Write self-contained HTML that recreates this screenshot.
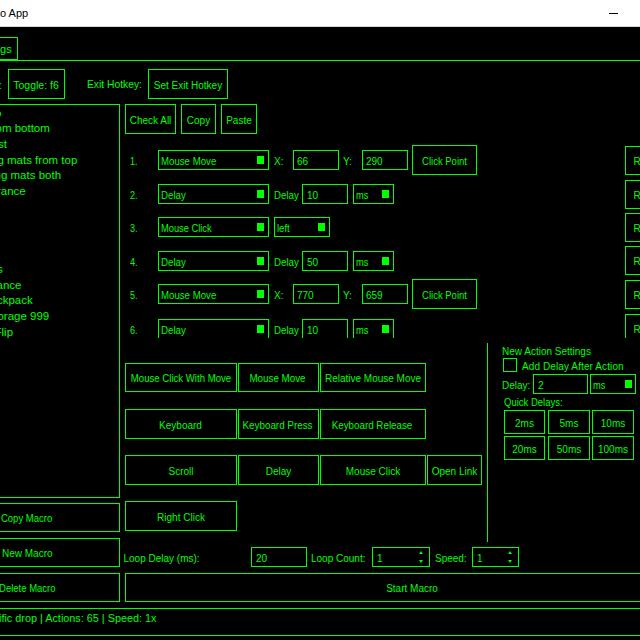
<!DOCTYPE html>
<html><head><meta charset="utf-8"><style>
html,body{margin:0;padding:0;width:640px;height:640px;overflow:hidden;background:#000;font-family:'Liberation Sans', sans-serif}
.b{position:absolute;box-sizing:border-box;border:1px solid #00ff00}
.t{position:absolute;white-space:nowrap;color:#00ff00}
</style></head><body>
<div style="position:absolute;left:0;top:0;width:640px;height:27px;background:#fff"></div>
<div style="position:absolute;left:0;top:26px;width:640px;height:1px;background:#d8d8d8"></div>
<div class="t" style="left:0px;top:8px;font-size:11px;line-height:11px;color:#000;">o App</div>
<div style="position:absolute;left:609px;top:13px;width:9px;height:1px;background:#000"></div>
<div class="b" style="left:-5px;top:37px;width:23px;height:23px;"></div>
<div class="t" style="left:-6px;top:44px;font-size:11px;line-height:11px;color:#00ff00;">ngs</div>
<div style="position:absolute;left:0px;top:60px;width:640px;height:1px;background:#00ff00"></div>
<div class="t" style="left:-1px;top:81px;font-size:10px;line-height:10px;color:#00ff00;">:</div>
<div class="b" style="left:8px;top:69px;width:57px;height:30px;"></div>
<div class="t" style="left:7.5px;width:57.0px;text-align:center;top:80px;font-size:10.5px;line-height:10.5px;">Toggle: f6</div>
<div class="t" style="left:87px;top:80px;font-size:10.3px;line-height:10.3px;color:#00ff00;">Exit Hotkey:</div>
<div class="b" style="left:148px;top:69px;width:80px;height:30px;"></div>
<div class="t" style="left:148px;width:80px;text-align:center;top:81px;font-size:10px;line-height:10px;">Set Exit Hotkey</div>
<div class="b" style="left:-5px;top:104px;width:125px;height:394px;"></div>
<div class="b" style="left:125px;top:104px;width:51px;height:30px;"></div>
<div class="t" style="left:125px;width:51px;text-align:center;top:116px;font-size:10px;line-height:10px;">Check All</div>
<div class="b" style="left:181px;top:104px;width:35px;height:30px;"></div>
<div class="t" style="left:181px;width:35px;text-align:center;top:116px;font-size:10px;line-height:10px;">Copy</div>
<div class="b" style="left:221px;top:104px;width:36px;height:30px;"></div>
<div class="t" style="left:221px;width:36px;text-align:center;top:116px;font-size:10px;line-height:10px;">Paste</div>
<div class="t" style="left:-5px;top:108px;font-size:11.5px;line-height:11.5px;color:#00ff00;">o</div>
<div class="t" style="left:-4.5px;top:123px;font-size:11.5px;line-height:11.5px;color:#00ff00;">om bottom</div>
<div class="t" style="left:-4.5px;top:139px;font-size:11.5px;line-height:11.5px;color:#00ff00;">ist</div>
<div class="t" style="left:-9px;top:155px;font-size:11.5px;line-height:11.5px;color:#00ff00;">ng mats from top</div>
<div class="t" style="left:-8px;top:170px;font-size:11.5px;line-height:11.5px;color:#00ff00;">ing mats both</div>
<div class="t" style="left:-3px;top:186px;font-size:11.5px;line-height:11.5px;color:#00ff00;">rance</div>
<div class="t" style="left:-3px;top:264px;font-size:11.5px;line-height:11.5px;color:#00ff00;">s</div>
<div class="t" style="left:-3.5px;top:280px;font-size:11.5px;line-height:11.5px;color:#00ff00;">ance</div>
<div class="t" style="left:-9.5px;top:295px;font-size:11.5px;line-height:11.5px;color:#00ff00;">ackpack</div>
<div class="t" style="left:-5.75px;top:311px;font-size:11.5px;line-height:11.5px;color:#00ff00;">torage 999</div>
<div class="t" style="left:-5.5px;top:327px;font-size:11.5px;line-height:11.5px;color:#00ff00;">Flip</div>
<div style="position:absolute;left:0;top:0;width:640px;height:338px;overflow:hidden"><div class="t" style="left:130px;top:157px;font-size:10px;line-height:10px;color:#00ff00;transform:scaleX(0.9);transform-origin:0 0;">1.</div>
<div class="b" style="left:158px;top:150px;width:111px;height:20px;"></div>
<div class="t" style="left:160.5px;top:157px;font-size:10px;line-height:10px;color:#00ff00;transform:scaleX(0.965);transform-origin:0 0;">Mouse Move</div>
<div style="position:absolute;left:257px;top:156px;width:7px;height:8px;background:#00ff00"></div>
<div class="t" style="left:274px;top:157px;font-size:10px;line-height:10px;color:#00ff00;">X:</div>
<div class="b" style="left:293px;top:150px;width:46px;height:20px;"></div>
<div class="t" style="left:297px;top:157px;font-size:10px;line-height:10px;color:#00ff00;">66</div>
<div class="t" style="left:343px;top:157px;font-size:10px;line-height:10px;color:#00ff00;">Y:</div>
<div class="b" style="left:362px;top:150px;width:46px;height:20px;"></div>
<div class="t" style="left:366px;top:157px;font-size:10px;line-height:10px;color:#00ff00;">290</div>
<div class="b" style="left:412px;top:145px;width:65px;height:30px;"></div>
<div class="t" style="left:412px;width:65px;text-align:center;top:157px;font-size:10px;line-height:10px;transform:scaleX(0.95);">Click Point</div>
<div class="t" style="left:130px;top:191px;font-size:10px;line-height:10px;color:#00ff00;transform:scaleX(0.9);transform-origin:0 0;">2.</div>
<div class="b" style="left:158px;top:184px;width:111px;height:20px;"></div>
<div class="t" style="left:160.5px;top:191px;font-size:10px;line-height:10px;color:#00ff00;transform:scaleX(0.97);transform-origin:0 0;">Delay</div>
<div style="position:absolute;left:257px;top:190px;width:7px;height:8px;background:#00ff00"></div>
<div class="t" style="left:274px;top:191px;font-size:10px;line-height:10px;color:#00ff00;transform:scaleX(0.97);transform-origin:0 0;">Delay</div>
<div class="b" style="left:302px;top:184px;width:46px;height:20px;"></div>
<div class="t" style="left:307px;top:191px;font-size:10px;line-height:10px;color:#00ff00;">10</div>
<div class="b" style="left:353px;top:184px;width:41px;height:20px;"></div>
<div class="t" style="left:355.5px;top:191px;font-size:10px;line-height:10px;color:#00ff00;transform:scaleX(0.93);transform-origin:0 0;">ms</div>
<div style="position:absolute;left:382px;top:190px;width:7px;height:8px;background:#00ff00"></div>
<div class="t" style="left:130px;top:224px;font-size:10px;line-height:10px;color:#00ff00;transform:scaleX(0.9);transform-origin:0 0;">3.</div>
<div class="b" style="left:158px;top:217px;width:111px;height:20px;"></div>
<div class="t" style="left:160.5px;top:224px;font-size:10px;line-height:10px;color:#00ff00;transform:scaleX(0.93);transform-origin:0 0;">Mouse Click</div>
<div style="position:absolute;left:257px;top:223px;width:7px;height:8px;background:#00ff00"></div>
<div class="b" style="left:274px;top:217px;width:56px;height:20px;"></div>
<div class="t" style="left:276.5px;top:224px;font-size:10px;line-height:10px;color:#00ff00;transform:scaleX(0.95);transform-origin:0 0;">left</div>
<div style="position:absolute;left:318px;top:223px;width:7px;height:8px;background:#00ff00"></div>
<div class="t" style="left:130px;top:258px;font-size:10px;line-height:10px;color:#00ff00;transform:scaleX(0.9);transform-origin:0 0;">4.</div>
<div class="b" style="left:158px;top:251px;width:111px;height:20px;"></div>
<div class="t" style="left:160.5px;top:258px;font-size:10px;line-height:10px;color:#00ff00;transform:scaleX(0.97);transform-origin:0 0;">Delay</div>
<div style="position:absolute;left:257px;top:257px;width:7px;height:8px;background:#00ff00"></div>
<div class="t" style="left:274px;top:258px;font-size:10px;line-height:10px;color:#00ff00;transform:scaleX(0.97);transform-origin:0 0;">Delay</div>
<div class="b" style="left:302px;top:251px;width:46px;height:20px;"></div>
<div class="t" style="left:307px;top:258px;font-size:10px;line-height:10px;color:#00ff00;">50</div>
<div class="b" style="left:353px;top:251px;width:41px;height:20px;"></div>
<div class="t" style="left:355.5px;top:258px;font-size:10px;line-height:10px;color:#00ff00;transform:scaleX(0.93);transform-origin:0 0;">ms</div>
<div style="position:absolute;left:382px;top:257px;width:7px;height:8px;background:#00ff00"></div>
<div class="t" style="left:130px;top:291px;font-size:10px;line-height:10px;color:#00ff00;transform:scaleX(0.9);transform-origin:0 0;">5.</div>
<div class="b" style="left:158px;top:284px;width:111px;height:20px;"></div>
<div class="t" style="left:160.5px;top:291px;font-size:10px;line-height:10px;color:#00ff00;transform:scaleX(0.965);transform-origin:0 0;">Mouse Move</div>
<div style="position:absolute;left:257px;top:290px;width:7px;height:8px;background:#00ff00"></div>
<div class="t" style="left:274px;top:291px;font-size:10px;line-height:10px;color:#00ff00;">X:</div>
<div class="b" style="left:293px;top:284px;width:46px;height:20px;"></div>
<div class="t" style="left:297px;top:291px;font-size:10px;line-height:10px;color:#00ff00;">770</div>
<div class="t" style="left:343px;top:291px;font-size:10px;line-height:10px;color:#00ff00;">Y:</div>
<div class="b" style="left:362px;top:284px;width:46px;height:20px;"></div>
<div class="t" style="left:366px;top:291px;font-size:10px;line-height:10px;color:#00ff00;">659</div>
<div class="b" style="left:412px;top:279px;width:65px;height:30px;"></div>
<div class="t" style="left:412px;width:65px;text-align:center;top:291px;font-size:10px;line-height:10px;transform:scaleX(0.95);">Click Point</div>
<div class="t" style="left:130px;top:326px;font-size:10px;line-height:10px;color:#00ff00;transform:scaleX(0.9);transform-origin:0 0;">6.</div>
<div class="b" style="left:158px;top:319px;width:111px;height:20px;"></div>
<div class="t" style="left:160.5px;top:326px;font-size:10px;line-height:10px;color:#00ff00;transform:scaleX(0.97);transform-origin:0 0;">Delay</div>
<div style="position:absolute;left:257px;top:325px;width:7px;height:8px;background:#00ff00"></div>
<div class="t" style="left:274px;top:326px;font-size:10px;line-height:10px;color:#00ff00;transform:scaleX(0.97);transform-origin:0 0;">Delay</div>
<div class="b" style="left:302px;top:319px;width:46px;height:20px;"></div>
<div class="t" style="left:307px;top:326px;font-size:10px;line-height:10px;color:#00ff00;">10</div>
<div class="b" style="left:353px;top:319px;width:41px;height:20px;"></div>
<div class="t" style="left:355.5px;top:326px;font-size:10px;line-height:10px;color:#00ff00;transform:scaleX(0.93);transform-origin:0 0;">ms</div>
<div style="position:absolute;left:382px;top:325px;width:7px;height:8px;background:#00ff00"></div>
<div class="b" style="left:625px;top:146px;width:56px;height:29px;"></div>
<div class="t" style="left:625px;width:56px;text-align:center;top:157px;font-size:10px;line-height:10px;text-align:left;padding-left:8.5px;box-sizing:border-box">Remove</div>
<div class="b" style="left:625px;top:180px;width:56px;height:29px;"></div>
<div class="t" style="left:625px;width:56px;text-align:center;top:191px;font-size:10px;line-height:10px;text-align:left;padding-left:8.5px;box-sizing:border-box">Remove</div>
<div class="b" style="left:625px;top:213px;width:56px;height:29px;"></div>
<div class="t" style="left:625px;width:56px;text-align:center;top:224px;font-size:10px;line-height:10px;text-align:left;padding-left:8.5px;box-sizing:border-box">Remove</div>
<div class="b" style="left:625px;top:246px;width:56px;height:29px;"></div>
<div class="t" style="left:625px;width:56px;text-align:center;top:257px;font-size:10px;line-height:10px;text-align:left;padding-left:8.5px;box-sizing:border-box">Remove</div>
<div class="b" style="left:625px;top:280px;width:56px;height:29px;"></div>
<div class="t" style="left:625px;width:56px;text-align:center;top:291px;font-size:10px;line-height:10px;text-align:left;padding-left:8.5px;box-sizing:border-box">Remove</div>
<div class="b" style="left:625px;top:314px;width:56px;height:29px;"></div>
<div class="t" style="left:625px;width:56px;text-align:center;top:325px;font-size:10px;line-height:10px;text-align:left;padding-left:8.5px;box-sizing:border-box">Remove</div></div>
<div class="b" style="left:125px;top:363px;width:112px;height:29px;"></div>
<div class="t" style="left:125px;width:112px;text-align:center;top:374px;font-size:10px;line-height:10px;transform:scaleX(0.96);">Mouse Click With Move</div>
<div class="b" style="left:238px;top:363px;width:81px;height:29px;"></div>
<div class="t" style="left:237px;width:81px;text-align:center;top:374px;font-size:10px;line-height:10px;transform:scaleX(0.98);">Mouse Move</div>
<div class="b" style="left:320px;top:363px;width:106px;height:29px;"></div>
<div class="t" style="left:320px;width:106px;text-align:center;top:374px;font-size:10px;line-height:10px;">Relative Mouse Move</div>
<div class="b" style="left:125px;top:409px;width:112px;height:30px;"></div>
<div class="t" style="left:124.5px;width:112.0px;text-align:center;top:421px;font-size:10px;line-height:10px;">Keyboard</div>
<div class="b" style="left:238px;top:409px;width:81px;height:30px;"></div>
<div class="t" style="left:237px;width:81px;text-align:center;top:421px;font-size:10px;line-height:10px;transform:scaleX(0.985);">Keyboard Press</div>
<div class="b" style="left:320px;top:409px;width:106px;height:30px;"></div>
<div class="t" style="left:319px;width:106px;text-align:center;top:421px;font-size:10px;line-height:10px;transform:scaleX(0.98);">Keyboard Release</div>
<div class="b" style="left:125px;top:455px;width:112px;height:30px;"></div>
<div class="t" style="left:125px;width:112px;text-align:center;top:467px;font-size:10px;line-height:10px;">Scroll</div>
<div class="b" style="left:238px;top:455px;width:81px;height:30px;"></div>
<div class="t" style="left:238px;width:81px;text-align:center;top:467px;font-size:10px;line-height:10px;">Delay</div>
<div class="b" style="left:320px;top:455px;width:106px;height:30px;"></div>
<div class="t" style="left:320px;width:106px;text-align:center;top:467px;font-size:10px;line-height:10px;">Mouse Click</div>
<div class="b" style="left:427px;top:455px;width:55px;height:30px;"></div>
<div class="t" style="left:427px;width:55px;text-align:center;top:467px;font-size:10px;line-height:10px;">Open Link</div>
<div class="b" style="left:125px;top:501px;width:112px;height:30px;"></div>
<div class="t" style="left:125px;width:112px;text-align:center;top:513px;font-size:10px;line-height:10px;">Right Click</div>
<div style="position:absolute;left:487px;top:343px;width:1px;height:199px;background:#00ff00"></div>
<div class="t" style="left:502px;top:347px;font-size:10px;line-height:10px;color:#00ff00;">New Action Settings</div>
<div class="b" style="left:503px;top:358px;width:14px;height:14px;"></div>
<div class="t" style="left:522px;top:362px;font-size:10px;line-height:10px;color:#00ff00;letter-spacing:0.1px">Add Delay After Action</div>
<div class="t" style="left:502px;top:381px;font-size:10px;line-height:10px;color:#00ff00;">Delay:</div>
<div class="b" style="left:533px;top:374px;width:55px;height:20px;"></div>
<div class="t" style="left:538px;top:381px;font-size:10px;line-height:10px;color:#00ff00;">2</div>
<div class="b" style="left:590px;top:374px;width:46px;height:20px;"></div>
<div class="t" style="left:592.5px;top:381px;font-size:10px;line-height:10px;color:#00ff00;transform:scaleX(0.93);transform-origin:0 0;">ms</div>
<div style="position:absolute;left:625px;top:380px;width:7px;height:8px;background:#00ff00"></div>
<div class="t" style="left:503.5px;top:398px;font-size:10px;line-height:10px;color:#00ff00;transform:scaleX(0.95);transform-origin:0 0;">Quick Delays:</div>
<div class="b" style="left:504px;top:410px;width:41px;height:24px;"></div>
<div class="t" style="left:504px;width:41px;text-align:center;top:419px;font-size:10px;line-height:10px;">2ms</div>
<div class="b" style="left:548px;top:410px;width:42px;height:24px;"></div>
<div class="t" style="left:548px;width:42px;text-align:center;top:419px;font-size:10px;line-height:10px;">5ms</div>
<div class="b" style="left:592px;top:410px;width:42px;height:24px;"></div>
<div class="t" style="left:592px;width:42px;text-align:center;top:419px;font-size:10px;line-height:10px;">10ms</div>
<div class="b" style="left:504px;top:436px;width:41px;height:24px;"></div>
<div class="t" style="left:504px;width:41px;text-align:center;top:445px;font-size:10px;line-height:10px;">20ms</div>
<div class="b" style="left:548px;top:436px;width:42px;height:24px;"></div>
<div class="t" style="left:548px;width:42px;text-align:center;top:445px;font-size:10px;line-height:10px;">50ms</div>
<div class="b" style="left:592px;top:436px;width:42px;height:24px;"></div>
<div class="t" style="left:592px;width:42px;text-align:center;top:445px;font-size:10px;line-height:10px;">100ms</div>
<div class="b" style="left:-5px;top:503px;width:125px;height:29px;"></div>
<div class="t" style="left:-5px;width:125px;text-align:center;top:514px;font-size:10px;line-height:10px;transform:scaleX(0.95);text-align:left;padding-left:3px;box-sizing:border-box">Copy Macro</div>
<div class="b" style="left:-5px;top:538px;width:125px;height:29px;"></div>
<div class="t" style="left:-5px;width:125px;text-align:center;top:549px;font-size:10px;line-height:10px;text-align:left;padding-left:7px;box-sizing:border-box">New Macro</div>
<div class="b" style="left:-5px;top:573px;width:125px;height:29px;"></div>
<div class="t" style="left:-5px;width:125px;text-align:center;top:584px;font-size:10px;line-height:10px;transform:scaleX(0.95);text-align:left;padding-left:1px;box-sizing:border-box">Delete Macro</div>
<div class="t" style="left:123.5px;top:554px;font-size:10px;line-height:10px;color:#00ff00;">Loop Delay (ms):</div>
<div class="b" style="left:251px;top:547px;width:56px;height:20px;"></div>
<div class="t" style="left:256px;top:554px;font-size:10px;line-height:10px;color:#00ff00;">20</div>
<div class="t" style="left:311px;top:554px;font-size:10px;line-height:10px;color:#00ff00;">Loop Count:</div>
<div class="b" style="left:372px;top:547px;width:58px;height:20px;"></div>
<div class="t" style="left:377px;top:554px;font-size:10px;line-height:10px;color:#00ff00;">1</div>
<div class="t" style="left:435px;top:554px;font-size:10px;line-height:10px;color:#00ff00;">Speed:</div>
<div class="b" style="left:472px;top:547px;width:47px;height:20px;"></div>
<div class="t" style="left:477px;top:554px;font-size:10px;line-height:10px;color:#00ff00;">1</div>
<div style="position:absolute;left:419px;top:551px;width:0;height:0;border-left:2px solid transparent;border-right:2px solid transparent;border-bottom:3px solid #00ff00"></div>
<div style="position:absolute;left:419px;top:560px;width:0;height:0;border-left:2px solid transparent;border-right:2px solid transparent;border-top:3px solid #00ff00"></div>
<div style="position:absolute;left:508px;top:551px;width:0;height:0;border-left:2px solid transparent;border-right:2px solid transparent;border-bottom:3px solid #00ff00"></div>
<div style="position:absolute;left:508px;top:560px;width:0;height:0;border-left:2px solid transparent;border-right:2px solid transparent;border-top:3px solid #00ff00"></div>
<div class="b" style="left:125px;top:573px;width:576px;height:29px;"></div>
<div class="t" style="left:385.5px;width:53.0px;text-align:center;top:584px;font-size:10px;line-height:10px;">Start Macro</div>
<div style="position:absolute;left:0px;top:608px;width:640px;height:1px;background:#00ff00"></div>
<div style="position:absolute;left:0px;top:635px;width:640px;height:1px;background:#00ff00"></div>
<div class="t" style="left:-1px;top:613px;font-size:10.85px;line-height:10.85px;color:#00ff00;">ific drop | Actions: 65 | Speed: 1x</div>
</body></html>
